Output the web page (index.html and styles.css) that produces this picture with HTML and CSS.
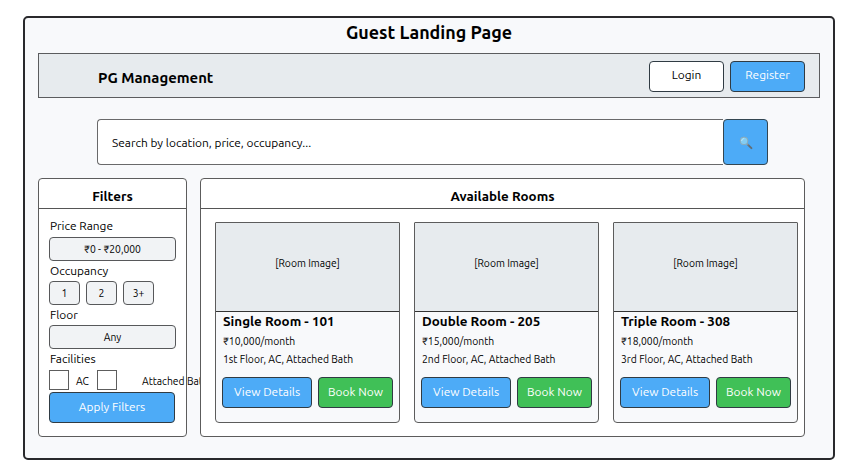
FILE: index.html
```html
<!DOCTYPE html>
<html lang="en">
<head>
<meta charset="utf-8">
<title>Guest Landing Page</title>
<link rel="stylesheet" href="styles.css">
</head>
<body>
<main class="page">
  <h1 class="title">Guest Landing Page</h1>
  <header class="topbar">
    <div class="brand">PG Management</div>
    <nav class="auth">
      <button class="btn plain">Login</button>
      <button class="btn blue">Register</button>
    </nav>
  </header>
  <div class="search">
    <div class="field">Search by location, price, occupancy...</div>
    <button class="go" aria-label="Search">
      <svg width="14" height="14" viewBox="0 0 14 14"><path d="M8.8 8.6L12.4 12.1" stroke="#626e76" stroke-width="2" stroke-linecap="round"/><path d="M7.8 7.7L9.4 9.2" stroke="#8c989e" stroke-width="1.3"/><circle cx="5" cy="4.9" r="3.9" fill="#83cdf3" stroke="#8ba9b8" stroke-width="1"/><path d="M2.7 5C2.8 3.4 3.8 2.7 5.2 2.6" fill="none" stroke="#c1eafb" stroke-width="1"/></svg>
    </button>
  </div>
  <div class="columns">
    <aside class="panel filters">
      <h2>Filters</h2>
      <div class="controls">
        <div class="label first">Price Range</div>
        <div class="pill">₹0 - ₹20,000</div>
        <div class="label">Occupancy</div>
        <div class="options"><div class="pill">1</div><div class="pill">2</div><div class="pill">3+</div></div>
        <div class="label">Floor</div>
        <div class="pill">Any</div>
        <div class="label">Facilities</div>
        <div class="checks"><i class="box"></i><span class="ac">AC</span><i class="box"></i><span class="bath">Attached Bath</span></div>
        <button class="btn blue apply">Apply Filters</button>
      </div>
    </aside>
    <section class="panel rooms">
      <h2>Available Rooms</h2>
      <div class="cards">
        <article class="card">
          <div class="photo">[Room Image]</div>
          <h3>Single Room - 101</h3>
          <p>₹10,000/month</p>
          <p>1st Floor, AC, Attached Bath</p>
          <div class="actions"><button class="btn blue">View Details</button><button class="btn green">Book Now</button></div>
        </article>
        <article class="card">
          <div class="photo">[Room Image]</div>
          <h3>Double Room - 205</h3>
          <p>₹15,000/month</p>
          <p>2nd Floor, AC, Attached Bath</p>
          <div class="actions"><button class="btn blue">View Details</button><button class="btn green">Book Now</button></div>
        </article>
        <article class="card">
          <div class="photo">[Room Image]</div>
          <h3>Triple Room - 308</h3>
          <p>₹18,000/month</p>
          <p>3rd Floor, AC, Attached Bath</p>
          <div class="actions"><button class="btn blue">View Details</button><button class="btn green">Book Now</button></div>
        </article>
      </div>
    </section>
  </div>
</main>
</body>
</html>
```
FILE: styles.css
```css
* { box-sizing: border-box; }
body {
  margin: 0;
  padding: 16px 0 0 23px;
  background: #fff;
  color: #000;
  font: 11.9px/16px Ubuntu, "Noto Sans", sans-serif;
  white-space: nowrap;
  overflow: hidden;
}
h1, h2, h3, p { margin: 0; }
button { font: inherit; padding: 0; }
.page {
  width: 812px;
  height: 444px;
  padding: 0 13px;
  border: 2px solid #29292c;
  border-radius: 5px;
  background: #f8f9fb;
}
.title {
  height: 35px;
  padding-top: 2px;
  text-align: center;
  font-size: 17.9px;
  line-height: 24px;
}
.topbar {
  display: flex;
  justify-content: space-between;
  height: 45px;
  padding: 7px 14px 0 59px;
  border: 1px solid #5b5c5e;
  background: #e7ebee;
}
.brand { padding-top: 6px; font-size: 14.9px; font-weight: 700; line-height: 22px; }
.auth { display: flex; gap: 6px; }
.btn {
  display: flex;
  align-items: center;
  justify-content: center;
  width: 75px;
  height: 31px;
  padding-bottom: 3px;
  border: 1px solid #303b43;
  border-radius: 4px;
  color: #000;
}
.plain { background: #fff; }
.blue { background: #4dabf7; color: #fff; }
.green { background: #40c057; color: #fff; }
.search { display: flex; width: 671px; height: 46px; margin: 21px 0 0 59px; }
.field {
  flex: 1;
  padding: 15px 0 0 14px;
  border: 1px solid #69696a;
  border-right: 0;
  border-radius: 4px 0 0 4px;
  background: #fff;
}
.go {
  display: flex;
  align-items: center;
  justify-content: center;
  width: 45px;
  padding-top: 1px;
  border: 1px solid #344651;
  border-radius: 4px;
  background: #4dabf7;
}
.columns { display: flex; gap: 13px; margin-top: 13px; }
.panel {
  height: 259px;
  border: 1px solid #5c5c5c;
  border-radius: 4px;
  background: #fff;
}
.panel h2 {
  height: 30px;
  padding-top: 9px;
  border-bottom: 1px solid #555;
  text-align: center;
  font-size: 13.4px;
  line-height: 18px;
}
.filters { width: 149px; }
.rooms { position: relative; width: 605px; }
.controls { padding: 8px 10px 0; }
.label { height: 20px; padding-left: 1px; line-height: 19px; }
.first { line-height: 18px; }
.pill {
  display: flex;
  align-items: center;
  justify-content: center;
  height: 24px;
  border: 1px solid #57585a;
  border-radius: 4px;
  background: #f1f3f5;
  font-size: 10.33px;
}
.options { display: flex; gap: 6px; }
.options .pill { width: 31px; }
.checks { display: flex; align-items: center; height: 20px; margin-top: 1px; font-size: 10.33px; }
.box { flex: none; width: 20px; height: 20px; border: 1px solid #5d5d5d; background: #fff; }
.ac { flex: none; width: 28px; padding-left: 7px; }
.bath { margin-left: 25px; }
.checks span { padding-top: 1px; }
.apply { width: 126px; margin-top: 2px; padding-bottom: 1px; }
.cards { display: flex; gap: 14px; padding: 13px 0 0 14px; }
.card {
  width: 185px;
  height: 201px;
  border: 1px solid #5c5c5c;
  border-radius: 1px 1px 4px 4px;
  background: #f8f9fb;
}
.photo {
  display: flex;
  align-items: center;
  justify-content: center;
  height: 89px;
  padding-bottom: 8px;
  border-bottom: 1px solid #333;
  background: #e7ebee;
  font-size: 10.33px;
}
.card h3 { height: 20px; padding-left: 7px; font-size: 13.4px; line-height: 19px; }
.card p { height: 18px; padding-left: 7px; font-size: 10.33px; line-height: 19px; }
.actions { display: flex; gap: 6px; padding: 9px 0 0 6px; }
.actions .btn { padding-bottom: 1px; }
.actions .blue { width: 90px; }
```
